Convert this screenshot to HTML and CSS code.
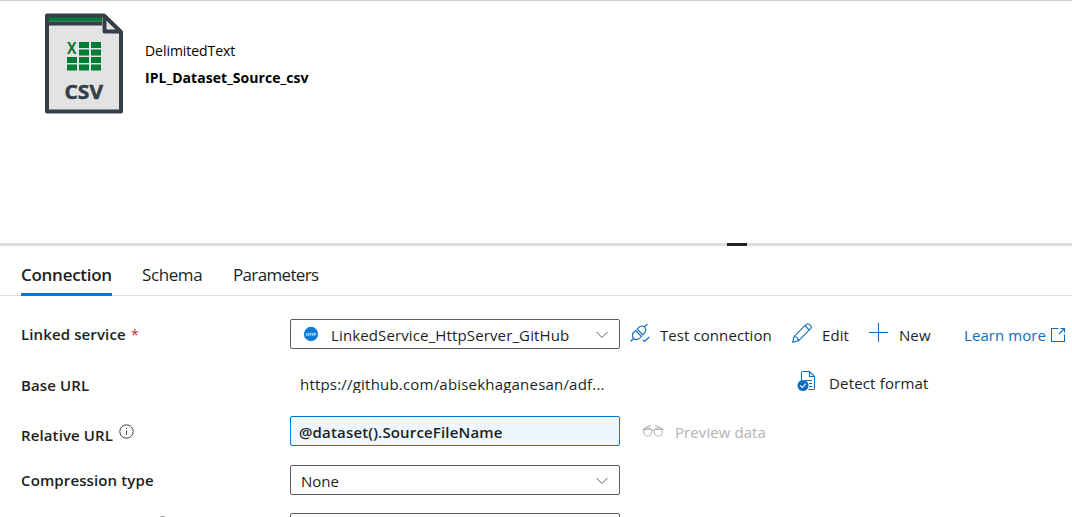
FILE: index.html
```html
<!DOCTYPE html>
<html lang="en">
<head>
<meta charset="utf-8">
<title>IPL_Dataset_Source_csv</title>
<link rel="stylesheet" href="styles.css">
</head>
<body>
<main class="page">
  <header class="summary">
    <svg class="file-icon" width="80" height="102" viewBox="0 0 80 102">
      <path d="M3 3H60L76 19V98H3Z" fill="#e3e3e3"/>
      <path d="M4 4H58V8.500H4Z" fill="#007c34"/>
      <path d="M3 10.500H58" stroke="#353f49" stroke-width="4"/>
      <path d="M3 2.500H60L77 19V98.500H3Z" fill="none" stroke="#353f49" stroke-width="4" stroke-linejoin="round"/>
      <path d="M60.500 3V18.500H76" fill="none" stroke="#353f49" stroke-width="4" stroke-linejoin="round"/>
      <g fill="#007c34">
        <path d="M35 29h10v6h-10zM47 29h10v6H47zM35 36.500h10v6h-10zM47 36.500h10v6H47zM23 44h10v6H23zM35 44h10v6h-10zM47 44h10v6H47zM23 51.500h10v6H23zM35 51.500h10v6h-10zM47 51.500h10v6H47z"/>
        <text class="icon-x" x="23" y="41" textLength="9.500" lengthAdjust="spacingAndGlyphs">X</text>
      </g>
      <text class="icon-csv" x="20.500" y="85.500" textLength="38.500" lengthAdjust="spacingAndGlyphs">CSV</text>
    </svg>
    <div class="titles">
      <div class="kind">DelimitedText</div>
      <div class="name">IPL_Dataset_Source_csv</div>
    </div>
  </header>
  <div class="splitter"><div class="grip"></div></div>
  <nav class="tabs">
    <div class="tab active">Connection</div>
    <div class="tab schema">Schema</div>
    <div class="tab params">Parameters</div>
  </nav>
  <section class="form">
    <div class="row linked">
      <div class="label">Linked service <span class="required">*</span></div>
      <div class="box select">
        <svg class="http" width="16" height="16" viewBox="0 0 16 16"><circle cx="8" cy="8" r="7.200" fill="#1583dd"/><path d="M2.500 4.500H13.500M2.500 11.500H13.500M5 2.200Q8 4 11 2.200M5 13.800Q8 12 11 13.800" fill="none" stroke="#0b68c3" stroke-width=".8"/><text class="http-text" x="3" y="9.800" textLength="10">HTTP</text></svg>
        <span class="value service">LinkedService_HttpServer_GitHub</span>
        <svg class="chevron" width="12" height="8" viewBox="0 0 12 8"><path d="M.5 1L6 6.500L11.500 1"/></svg>
      </div>
      <div class="actions">
        <svg class="ico plug" width="20" height="20" viewBox="0 0 20 20"><path d="M.5 18.500L3.500 15.500M17.500 .8L14.500 4M3.500 15.500C1.300 12.500 3 9.500 5.500 7.500L11.500 13.500C9 16.500 6 17.500 3.500 15.500ZM7.200 6.200C9.500 3.500 12 1.800 14.500 4S15.800 9 12.800 12ZM12.800 16.800L14.500 18.500L19.300 14"/></svg>
        <span class="action test">Test connection</span>
        <svg class="ico pencil" width="20" height="20" viewBox="0 0 20 20"><path d="M.7 19.200L2.300 13.200L14.300 1.300Q15.500.2 17 1.100L18.700 2.800Q20 4.300 18.700 5.600L6.700 17.600ZM13 2.700L17.200 7M2.300 13.200Q5.800 14 6.700 17.600"/></svg>
        <span class="action edit">Edit</span>
        <svg class="ico plus" width="19" height="19" viewBox="0 0 19 19"><path d="M9.500 0V19M0 9.500H19"/></svg>
        <span class="action new">New</span>
        <span class="action learn">Learn more</span>
        <svg class="ico external" width="15" height="15" viewBox="0 0 15 15"><path d="M7.500 1.500H.5V14.500H13.500V7.500M9.500 1.500H13.500V5.500M13.500 1.500L8 7"/></svg>
      </div>
    </div>
    <div class="row base">
      <div class="label">Base URL</div>
      <div class="url">https://github.com/abisekhaganesan/adf...</div>
      <div class="actions">
        <svg class="ico detect" width="20" height="22" viewBox="0 0 20 22"><path d="M4.500 11V2.500Q4.500 1.500 5.500 1.500H12.500L17.500 6.500V18.500Q17.500 19.500 16.500 19.500H11.500M12.500 1.500V6.500H17.500M8 10.500H15M12 13.500H15M12 16.500H15"/><circle cx="6" cy="15.500" r="5.500" fill="#0f6cbd" stroke="none"/><path class="tick" d="M3.300 15.500L5.300 17.500L8.800 13.700"/></svg>
        <span class="action format">Detect format</span>
      </div>
    </div>
    <div class="row relative">
      <div class="label">Relative URL <svg class="info" width="15" height="15" viewBox="0 0 15 15"><circle cx="7.500" cy="7.500" r="6.700"/><path d="M7.500 6.500V11M7.500 4V5"/></svg></div>
      <div class="box expression"><span class="value">@dataset().SourceFileName</span></div>
      <div class="actions disabled">
        <svg class="ico glasses" width="22" height="14" viewBox="0 0 22 14"><ellipse cx="5.800" cy="8" rx="4" ry="4.200"/><ellipse cx="16.200" cy="8" rx="4" ry="4.200"/><path d="M9.500 6.500H12.500M.5 5.500H9.500M12.500 5.500H21.500M1 5.500L6 2.500Q8 1 9 2.500M21 5.500L16 2.500Q14 1 13 2.500"/></svg>
        <span class="action preview">Preview data</span>
      </div>
    </div>
    <div class="row compression">
      <div class="label">Compression type</div>
      <div class="box select"><span class="value none">None</span>
        <svg class="chevron" width="12" height="8" viewBox="0 0 12 8"><path d="M.5 1L6 6.500L11.500 1"/></svg>
      </div>
    </div>
    <div class="row last">
      <div class="label"><svg class="info" width="15" height="15" viewBox="0 0 15 15"><circle cx="7.500" cy="7.500" r="6.700"/></svg></div>
      <div class="box select"></div>
    </div>
  </section>
</main>
</body>
</html>
```
FILE: styles.css
```css
* { box-sizing: border-box; }
body { margin: 0; background: #fff; color: #201f1e; font-family: "Open Sans", "Noto Sans", sans-serif; font-size: 15px; }
.page { width: 1072px; height: 517px; overflow: hidden; white-space: nowrap; }
svg { display: block; flex: none; }
.summary { height: 243px; border-top: 1px solid #cfcfcf; display: flex; padding: 11px 0 0 44px; color: #000; }
.file-icon { margin-top: 1px; }
.titles { padding: 29px 0 0 21px; }
.kind { font-size: 14px; line-height: 20px; letter-spacing: -.05px; }
.name { font-size: 14px; font-weight: 700; line-height: 20px; margin-top: 7px; letter-spacing: .03px; }
.icon-x { font: 700 16px "Open Sans", sans-serif; }
.icon-csv { font: 700 20px "Open Sans", sans-serif; fill: #353f49; stroke: #353f49; stroke-width: .5px; }
.splitter { height: 3px; background: #dedede; padding-left: 727px; }
.grip { width: 20px; height: 3px; background: #222; }
.tabs { height: 50px; border-bottom: 1px solid #dcdcdc; display: flex; gap: 30px; padding-left: 21px; }
.tab { height: 50px; line-height: 24px; padding-top: 17px; font-size: 17px; letter-spacing: -.4px; }
.active { width: 91px; font-weight: 600; letter-spacing: -.28px; border-bottom: 3px solid #0078d4; }
.schema { width: 61px; }
.params { letter-spacing: -.65px; }
.form { padding: 23px 0 0 21px; }
.row { display: grid; grid-template-columns: 269px 330px 1fr; height: 30px; }
.base { margin-top: 21px; }
.relative { margin-top: 16px; }
.compression { margin-top: 19px; }
.last { margin-top: 18px; }
.label { font-size: 15px; font-weight: 600; line-height: 30px; letter-spacing: .12px; display: flex; }
.required { color: #c4314b; margin-left: 5px; font-weight: 400; }
.box { border: 1px solid #605e5c; border-radius: 2px; height: 30px; display: flex; align-items: center; }
.value { line-height: 28px; padding-top: 2px; }
.http { margin-left: 12px; }
.http-text { font: 700 4px "Open Sans", sans-serif; fill: #d8edff; }
.service { margin-left: 12px; letter-spacing: .13px; }
.none { margin-left: 10px; }
.chevron { margin: 2px 11px 0 auto; fill: none; stroke: #605e5c; }
.url { height: 23px; overflow: hidden; line-height: 29px; padding-left: 10px; letter-spacing: .2px; }
.expression { border-color: #0078d4; background: #eff6fc; padding-left: 8px; font-weight: 600; letter-spacing: .16px; }
.actions { display: flex; align-items: center; height: 30px; }
.action { line-height: 30px; padding-top: 2px; letter-spacing: .08px; }
.ico { fill: none; stroke: #0f6cbd; stroke-width: 1.1; }
.plug { margin: -3px 0 0 10px; }
.test { margin-left: 10px; width: 113px; }
.pencil { margin: -3px 0 0 19px; }
.edit { margin-left: 10px; width: 28px; }
.plus { margin: -3px 0 0 19px; }
.new { margin-left: 11px; width: 32px; }
.learn { margin-left: 33px; width: 82px; color: #0f6cbd; }
.external { margin: 1px 0 0 5px; }
.detect { margin: -8px 0 0 177px; }
.tick { stroke: #fff; }
.format { margin-left: 12px; padding-top: 0; margin-top: -4px; letter-spacing: .17px; }
.info { margin: 7px 0 0 6px; fill: none; stroke: #444; stroke-width: 1; }
.relative .label { padding-top: 4px; line-height: 30px; }
.relative .info { margin-top: 4px; }
.disabled { color: #b5b3b1; }
.disabled .ico { stroke: #b5b3b1; }
.glasses { margin: 0 0 0 22px; }
.preview { margin-left: 11px; }
.last .info { margin: 3px 0 0 134px; }
```
